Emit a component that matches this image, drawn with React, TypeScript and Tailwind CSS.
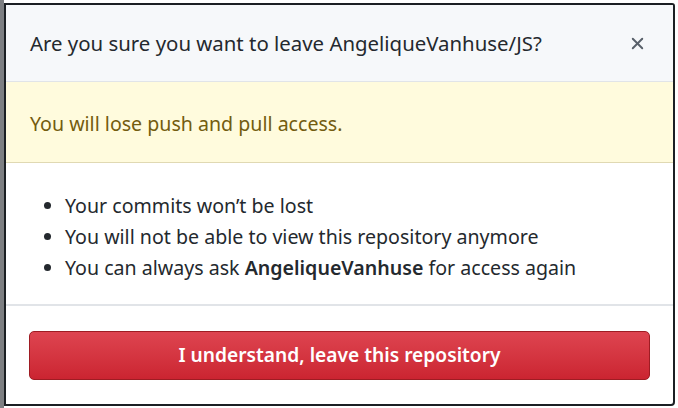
import { X } from "lucide-react";

export default function App() {
  return (
    <div className="w-[678px] h-[408px] bg-white flex" style={{ fontFamily: '"Noto Sans", "Open Sans", sans-serif' }}>
      {/* backdrop sliver */}
      <div className="w-[4px] h-full bg-[#7d7f82]" />
      <div className="pt-[3px] flex-1 pr-[3px] pb-[2px]">
        <div className="h-full flex flex-col border-2 border-[#1b1f23] rounded-br-[4px] rounded-tr-[3px] overflow-hidden bg-white">
          {/* Header */}
          <div className="h-[77px] shrink-0 flex items-center justify-between pl-[24px] pr-[26px] bg-[#f6f8fa] border-b border-[#e1e4e8]">
            <h1 className="text-[20.4px] text-[#24292e] leading-none">Are you sure you want to leave AngeliqueVanhuse/JS?</h1>
            <button className="text-[#586069]">
              <X className="w-[19px] h-[19px]" strokeWidth={2.4} />
            </button>
          </div>

          {/* Flash warning */}
          <div className="h-[81px] shrink-0 flex items-center pl-[24px] bg-[#fffbdd] border-b border-[#e0d9b3] text-[#735c0f] text-[19.6px]">
            <span className="mt-[4px]">You will lose push and pull access.</span>
          </div>

          {/* List */}
          <div className="h-[143px] shrink-0 border-b-2 border-[#e1e4e8] pt-[27px] pl-[59px]">
            <ul className="list-disc text-[19.6px] text-[#24292e] leading-[31px]">
              <li>Your commits won’t be lost</li>
              <li>You will not be able to view this repository anymore</li>
              <li>
                You can always ask <strong className="font-semibold">AngeliqueVanhuse</strong> for access again
              </li>
            </ul>
          </div>

          {/* Footer */}
          <div className="flex-1 px-[23px] pt-[25px]">
            <button className="w-full h-[49px] rounded-[5px] border border-[#9e1c23] bg-gradient-to-b from-[#de4450] to-[#cb2431] text-white text-[19.2px] font-semibold">
              I understand, leave this repository
            </button>
          </div>
        </div>
      </div>
    </div>
  );
}
